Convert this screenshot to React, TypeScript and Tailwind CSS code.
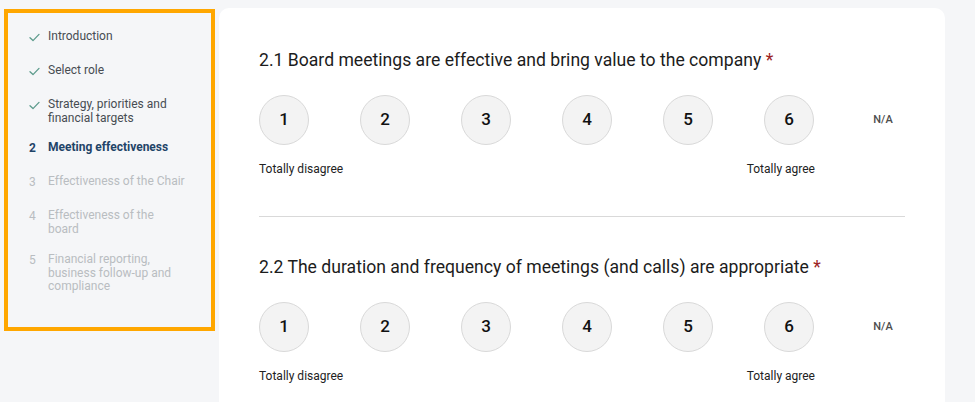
import type React from "react";

type Step = {
	marker: "check" | string;
	label: string[];
	state: "done" | "active" | "todo";
};

const steps: Step[] = [
	{ marker: "check", label: ["Introduction"], state: "done" },
	{ marker: "check", label: ["Select role"], state: "done" },
	{
		marker: "check",
		label: ["Strategy, priorities and", "financial targets"],
		state: "done",
	},
	{ marker: "2", label: ["Meeting effectiveness"], state: "active" },
	{ marker: "3", label: ["Effectiveness of the Chair"], state: "todo" },
	{ marker: "4", label: ["Effectiveness of the", "board"], state: "todo" },
	{
		marker: "5",
		label: ["Financial reporting,", "business follow-up and", "compliance"],
		state: "todo",
	},
];

const questions = [
	"2.1 Board meetings are effective and bring value to the company",
	"2.2 The duration and frequency of meetings (and calls) are appropriate",
];

const Check = () => (
	<svg width="11" height="9" viewBox="0 0 11 9" fill="none">
		<path
			d="M1 4.8 L4 7.6 L10 1.4"
			stroke="#5b9a8b"
			strokeWidth="1.3"
			strokeLinecap="round"
			strokeLinejoin="round"
		/>
	</svg>
);

const Question = ({ title }: { title: string }) => (
	<div className="flex flex-col">
		<h2 className="text-[17.6px] leading-[24px] text-[#1c1c1c]">
			{title} <span className="text-[#9c2424]">*</span>
		</h2>
		<div className="flex items-center gap-[51px] mt-[23px]">
			{[1, 2, 3, 4, 5, 6].map((n) => (
				<button
					key={n}
					type="button"
					className="w-[50px] h-[50px] rounded-full bg-[#f3f3f3] border border-[#d9d9d9] flex items-center justify-center text-[17px] font-medium text-[#111]"
				>
					{n}
				</button>
			))}
			<span className="w-[36px] text-center text-[11px] font-medium text-[#4d4d4d]">
				N/A
			</span>
		</div>
		<div className="flex justify-between w-[556px] mt-[16px] text-[12px] leading-[16px] text-[#222]">
			<span>Totally disagree</span>
			<span>Totally agree</span>
		</div>
	</div>
);

const App: React.FC = () => {
	return (
		<div
			className="flex h-[402px] w-full overflow-hidden bg-[#f5f6f8]"
			style={{ fontFamily: "Roboto, 'Liberation Sans', sans-serif" }}
		>
			{/* Sidebar */}
			<aside className="w-[219px] shrink-0 pl-[4px] pt-[9px]">
				<div className="w-[211px] h-[322px] border-4 border-[#ffa700] pt-[11px] pl-[18px]">
					<ul className="flex flex-col gap-[10px]">
						{steps.map((s) => (
							<li key={s.label.join(" ")} className="flex min-h-[24px]">
								<div
									className={`w-[22px] shrink-0 pt-[6px] text-[12px] leading-[14px] ${
										s.state === "active"
											? "font-bold text-[#1f4468]"
											: "text-[#b9bdc1]"
									}`}
								>
									{s.marker === "check" ? (
										<span className="flex h-[14px] items-center pl-[3px]">
											<Check />
										</span>
									) : (
										<span className="pl-[3px]">{s.marker}</span>
									)}
								</div>
								<div
									className={`pt-[6px] text-[12px] leading-[13.7px] ${
										s.state === "done"
											? "text-[#474c52]"
											: s.state === "active"
												? "font-bold text-[#1f4468]"
												: "text-[#b9bdc1]"
									}`}
								>
									{s.label.map((l) => (
										<div key={l}>{l}</div>
									))}
								</div>
							</li>
						))}
					</ul>
				</div>
			</aside>

			{/* Main card */}
			<main className="w-[726px] shrink-0 mt-[8px] bg-white rounded-t-[10px] pt-[40px] px-[40px]">
				<Question title={questions[0]} />
				<div className="h-px bg-[#d9d9d9] mt-[39px] mb-[38px]" />
				<Question title={questions[1]} />
			</main>
		</div>
	);
};

export default App;
